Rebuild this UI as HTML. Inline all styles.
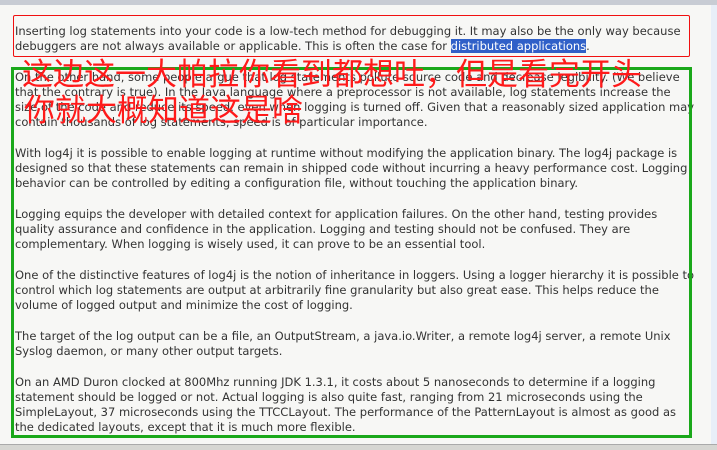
<!DOCTYPE html>
<html><head><meta charset="utf-8"><style>
body{margin:0;width:717px;height:449px;background:#f7f7f5;position:relative;overflow:hidden;font-family:"DejaVu Sans","Liberation Sans",sans-serif;}
.top{position:absolute;left:0;top:0;width:717px;height:5px;background:#c8ccd4;}
.bot{position:absolute;left:0;top:444px;width:717px;height:5px;background:#d6d6d2;border-top:1px solid #aaa;}
.sb{position:absolute;left:711px;top:5px;width:6px;height:439px;background:#e8eef8;}
.l{position:absolute;left:15px;font-size:11.5px;color:#333;white-space:nowrap;line-height:15px;}
.red{position:absolute;left:13px;top:15px;width:675px;height:40px;border:1px solid #f01010;border-radius:2px;}
.green{position:absolute;left:11px;top:67px;width:675px;height:365px;border:3px solid #1aa81a;}
.cn{position:absolute;color:#ff1a1a;font-family:"Noto Sans CJK SC","WenQuanYi Zen Hei",sans-serif;font-size:31px;line-height:34px;white-space:nowrap;}
.hl{background:#3060c8;color:#fff;}
</style></head><body>
<div class="top"></div><div class="sb"></div><div class="bot"></div>
<div class="l" style="top:24px">Inserting log statements into your code is a low-tech method for debugging it. It may also be the only way because</div>
<div class="l" style="top:39px">debuggers are not always available or applicable. This is often the case for <span class="hl">distributed applications</span>.</div>
<div class="l" style="top:70px">On the other hand, some people argue that log statements pollute source code and decrease legibility. (We believe</div>
<div class="l" style="top:85px">that the contrary is true). In the Java language where a preprocessor is not available, log statements increase the</div>
<div class="l" style="top:100px">size of the code and reduce its speed, even when logging is turned off. Given that a reasonably sized application may</div>
<div class="l" style="top:115px">contain thousands of log statements, speed is of particular importance.</div>
<div class="l" style="top:146px">With log4j it is possible to enable logging at runtime without modifying the application binary. The log4j package is</div>
<div class="l" style="top:161px">designed so that these statements can remain in shipped code without incurring a heavy performance cost. Logging</div>
<div class="l" style="top:176px">behavior can be controlled by editing a configuration file, without touching the application binary.</div>
<div class="l" style="top:207px">Logging equips the developer with detailed context for application failures. On the other hand, testing provides</div>
<div class="l" style="top:222px">quality assurance and confidence in the application. Logging and testing should not be confused. They are</div>
<div class="l" style="top:237px">complementary. When logging is wisely used, it can prove to be an essential tool.</div>
<div class="l" style="top:268px">One of the distinctive features of log4j is the notion of inheritance in loggers. Using a logger hierarchy it is possible to</div>
<div class="l" style="top:283px">control which log statements are output at arbitrarily fine granularity but also great ease. This helps reduce the</div>
<div class="l" style="top:298px">volume of logged output and minimize the cost of logging.</div>
<div class="l" style="top:329px">The target of the log output can be a file, an OutputStream, a java.io.Writer, a remote log4j server, a remote Unix</div>
<div class="l" style="top:344px">Syslog daemon, or many other output targets.</div>
<div class="l" style="top:375px">On an AMD Duron clocked at 800Mhz running JDK 1.3.1, it costs about 5 nanoseconds to determine if a logging</div>
<div class="l" style="top:390px">statement should be logged or not. Actual logging is also quite fast, ranging from 21 microseconds using the</div>
<div class="l" style="top:405px">SimpleLayout, 37 microseconds using the TTCCLayout. The performance of the PatternLayout is almost as good as</div>
<div class="l" style="top:420px">the dedicated layouts, except that it is much more flexible.</div>
<div class="red"></div><div class="green"></div>
<div class="cn" style="left:22px;top:55px">这边这一大帕拉你看到都想吐，但是看完开头</div>
<div class="cn" style="left:24px;top:91px">你就大概知道这是啥</div>
</body></html>
